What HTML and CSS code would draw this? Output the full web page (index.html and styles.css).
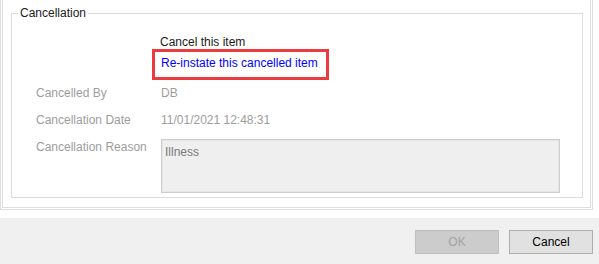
FILE: index.html
```html
<!DOCTYPE html>
<html>
<head>
<meta charset="utf-8">
<link rel="stylesheet" href="styles.css">
</head>
<body>
<div class="panel">
  <fieldset class="group">
    <legend class="legend">Cancellation</legend>
    <div class="actions">
      <div class="action">Cancel this item</div>
      <div class="highlight"><span class="link">Re-instate this cancelled item</span></div>
    </div>
    <div class="fields">
      <div class="label">Cancelled By</div>
      <div class="value">DB</div>
      <div class="label">Cancellation Date</div>
      <div class="value">11/01/2021 12:48:31</div>
      <div class="label">Cancellation Reason</div>
      <div class="textbox">Illness</div>
    </div>
  </fieldset>
</div>
<div class="footer">
  <button class="btn btn-disabled">OK</button>
  <button class="btn">Cancel</button>
</div>
</body>
</html>
```
FILE: styles.css
```css
* { box-sizing: border-box; }
html, body { margin: 0; padding: 0; }
body {
  width: 599px;
  height: 264px;
  overflow: hidden;
  background: #ffffff;
  font-family: "Liberation Sans", Arial, sans-serif;
  font-size: 12px;
  line-height: 14px;
  color: #1a1a1a;
}
.panel {
  width: 593px;
  height: 210px;
  background: #ffffff;
  border-left: 3px double #dedede;
  border-right: 3px double #dedede;
  border-bottom: 3px double #dedede;
  padding: 7px 8px 0 8px;
}
.group {
  margin: 0;
  width: 572px;
  border: 1px solid #dcdcdc;
  padding: 15px 0 4px 0;
  min-width: 0;
}
.legend {
  margin-left: 6px;
  padding: 0 2px;
  line-height: 13px;
  color: #1a1a1a;
}
.actions {
  padding-left: 149px;
  display: flex;
  flex-direction: column;
  align-items: flex-start;
}
.action {
  margin-left: -1px;
  color: #1a1a1a;
}
.highlight {
  margin-left: -9px;
  width: 177px;
  border: 3px solid #ec3b3e;
  padding: 4px 0 7px 6px;
}
.link {
  color: #0000ff;
  white-space: nowrap;
}
.fields {
  margin-top: 6px;
  padding-left: 24px;
  display: grid;
  grid-template-columns: 125px 399px;
  grid-template-rows: 14px 14px auto;
  row-gap: 13px;
  color: #9d9d9d;
}
.textbox {
  margin-top: -1px;
  height: 54px;
  background: #efefef;
  border: 1px solid #cdcdcd;
  box-shadow: inset 0 0 0 1px #e6e6e6;
  padding: 5px 3px;
  color: #7a7a7a;
}
.footer {
  margin-top: 8px;
  height: 46px;
  background: #f0f0f0;
  padding: 12px 6px 0 0;
  display: flex;
  justify-content: flex-end;
  align-items: flex-start;
  gap: 10px;
}
.btn {
  width: 84px;
  height: 24px;
  margin: 0;
  padding: 0;
  font-family: "Liberation Sans", Arial, sans-serif;
  font-size: 12px;
  background: #e1e1e1;
  border: 1px solid #adadad;
  color: #000000;
}
.btn-disabled {
  background: #cccccc;
  border-color: #bfbfbf;
  color: #a3a3a3;
}
```
